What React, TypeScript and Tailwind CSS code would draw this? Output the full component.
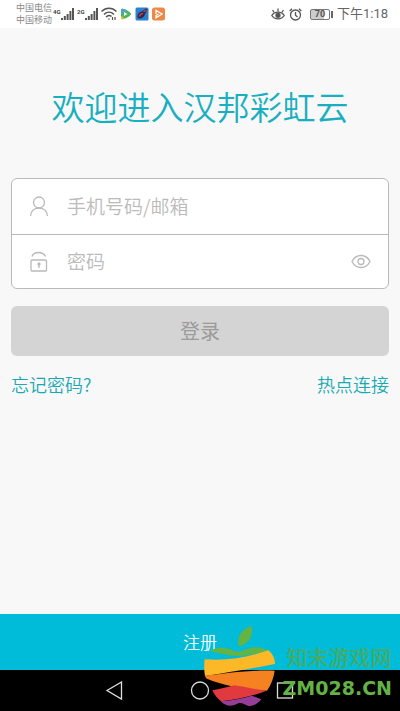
import { useState } from "react";

function SignalBars({ label }: { label: string }) {
  return (
    <div className="flex items-start">
      <span className="w-2 text-[6px] leading-2 font-bold text-[#444]">
        {label}
      </span>
      <svg width="13" height="13" viewBox="0 0 13 13" fill="#555">
        <rect x="0" y="10" width="2" height="2" />
        <rect x="2.8" y="8" width="2" height="4" />
        <rect x="5.6" y="6" width="2" height="6" />
        <rect x="8.4" y="3" width="2" height="9" />
        <rect x="11" y="0" width="2" height="12" />
      </svg>
    </div>
  );
}

function StatusBar() {
  return (
    <header className="flex h-7 items-center justify-between bg-white pr-3 pl-4 font-['Roboto','Noto_Sans_CJK_SC',sans-serif]">
      <div className="flex items-center gap-[3px]">
        <div className="w-[34px] text-[9px] leading-3 whitespace-nowrap text-[#888]">
          <p>中国电信</p>
          <p>中国移动</p>
        </div>
        <SignalBars label="4G" />
        <SignalBars label="2G" />
        <svg width="16" height="14" viewBox="0 0 16 14" fill="none" stroke="#555" strokeWidth="1.500">
          <path d="M.5 4.500C5 .3 11 .3 15.500 4.500" />
          <path d="M3 7.500c3-3 7-3 10 0" />
          <path d="M5 10c2-2 4-2 5.500-.5" />
          <path d="M6.500 11.500 8 13l1.200-1.300z" fill="#555" stroke="none" />
          <path d="M11.500 10v3M14 10v3" strokeWidth="1.200" />
        </svg>
        <svg width="12" height="12" viewBox="0 0 12 12">
          <path d="M1 2C1 1 2 .5 3.500 1 6 1.500 8.500 3 10.500 5c.8.800.8 1.400 0 2C8.500 9 6 10.500 3.500 11 2 11.500 1 11 1 10z" fill="#4cb45a" />
          <path d="M1 2C1 1 2 .5 3.500 1 5 1.300 6.500 2 7.500 2.600L1 6z" fill="#4aa7c9" />
          <path d="M1 7.500 5 10.500l-1.500.5C2 11.500 1 11 1 10z" fill="#e6b43c" />
          <path d="M4 4v4l3.500-2z" fill="#fff" />
        </svg>
        <svg width="14" height="14" viewBox="0 0 14 14">
          <rect x=".5" y=".5" width="13" height="13" rx="1.500" fill="#2c82cc" />
          <path d="M2.500 9.500c0-3 2-4.500 4.500-5L11 1.500l1.500 1L10 7c-.5 3-3.500 5-6 4.500-1 0-1.500-1-1.500-2z" fill="#29284f" />
          <path d="M4.500 9.500C5 7.500 6.500 6.500 8 6.500M8.500 5l3-2" fill="none" stroke="#d83c48" strokeWidth="1.500" />
        </svg>
        <svg width="13" height="14" viewBox="0 0 13 14">
          <rect y=".5" width="13" height="13" rx="2.500" fill="#ed8845" />
          <path d="M4 7V3.500L10 7l-6 3.800V8.500L6.500 7" fill="none" stroke="#fff" strokeWidth="1.300" />
        </svg>
      </div>
      <div className="flex items-center gap-1">
        <svg width="14" height="14" viewBox="0 0 14 14" fill="none" stroke="#555" strokeWidth="1.300">
          <path d="M.8 8.500C3.500 4 10.500 4 13.200 8.500 10.500 13 3.500 13 .8 8.500z" />
          <circle cx="7" cy="8.300" r="2" fill="#555" />
          <path d="M7 4.500V1.500M3.200 5.500 1.500 3M10.800 5.500 12.500 3" />
        </svg>
        <svg width="13" height="13" viewBox="0 0 13 13" fill="none" stroke="#555" strokeWidth="1.300">
          <circle cx="6.500" cy="7" r="5" />
          <path d="M6.500 4v3.200L8.500 9M.7 3 3 .8M12.300 3 10 .8" />
        </svg>
        <div className="flex items-center pl-1">
          <div className="flex h-[11px] w-5 items-center justify-center rounded-xs border border-[#777] bg-linear-to-r from-[#ccc] from-70% to-white to-70% text-[9px] leading-none font-bold text-[#555]">
            70
          </div>
          <div className="ml-px h-[7px] w-0.5 bg-[#666]" />
        </div>
        <span className="text-[13px] leading-5 text-[#666]">下午1:18</span>
      </div>
    </header>
  );
}

function UserIcon() {
  return (
    <svg width="20" height="22" viewBox="0 0 20 22" fill="none" stroke="#b9b9b9" strokeWidth="1.300">
      <circle cx="10" cy="6.500" r="5.500" />
      <path d="M1.500 20c.3-4.500 3.300-8 8.500-8s8.200 3.500 8.500 8" />
    </svg>
  );
}

function LockIcon() {
  return (
    <svg width="20" height="22" viewBox="0 0 20 22" fill="none" stroke="#b9b9b9" strokeWidth="1.300">
      <rect x="2" y="9" width="15.500" height="11" rx="1" />
      <path d="M3 5.500c1-2.700 3.500-4 6.500-4s5.500 1.300 7 4" />
      <circle cx="10" cy="13" r="1" />
      <path d="M10 13.500V17" />
    </svg>
  );
}

function EyeIcon() {
  return (
    <svg width="20" height="16" viewBox="0 0 20 16" fill="none" stroke="#b9b9b9" strokeWidth="1.300">
      <path d="M1 7.500c4-8 14-8 18 0-4 8-14 8-18 0z" />
      <circle cx="10" cy="7.500" r="3" />
    </svg>
  );
}

function Watermark() {
  return (
    <div className="pointer-events-none absolute right-2 bottom-1 flex items-end gap-[7px]">
      <svg width="73" height="82" viewBox="30 27 219 246">
        <path d="M137 91c-6-24 4-51 39-61 7 29-9 56-39 61z" fill="#63b345" />
        <path d="M51 105c25-16 53-9 71-1 12 5 20 3 32-2 22-10 46-13 70 1-25 10-60 16-89 17-28-1-55-8-84-15z" fill="#63b345" />
        <path d="M35 130c70 5 125-5 191-27 13 10 20 25 20 41-66 13-135 25-210 36-3-17-3-34-1-50z" fill="#fdb827" />
        <path d="M36 179c55-5 115-17 209-15-3 21-10 41-23 60-59-3-127-14-180-36-4-3-5-6-6-9z" fill="#f58220" />
        <path d="M58 223c22-4 43-9 66-15 32 5 62 12 97 16-39 15-84 27-137 32-11-9-19-19-26-33z" fill="#e03a3e" />
        <path d="M83 256c36-3 65-8 93-17l29 11c-8 10-20 19-34 20-15 0-20-13-35-8-20 12-38 9-53-6z" fill="#963d97" />
      </svg>
      <div className="pb-[3px] whitespace-nowrap">
        <p className="pl-1 text-[21px] leading-8 font-medium text-[#45ab68]">
          知末游戏网
        </p>
        <p className="font-['DejaVu_Sans'] text-[19px] leading-8 font-bold text-[#62b245]">
          ZM028.CN
        </p>
      </div>
    </div>
  );
}

export default function App() {
  const [account, setAccount] = useState("");
  const [password, setPassword] = useState("");
  const [visible, setVisible] = useState(false);

  const inputClass =
    "min-w-0 flex-1 bg-transparent text-[19px] font-[350] text-gray-700 outline-none placeholder:text-[#bbb]";

  return (
    <div className="flex min-h-screen flex-col bg-[#f8f8f8] font-['Noto_Sans_CJK_SC',sans-serif]">
      <StatusBar />

      <main className="flex-1 px-[11px] pt-[54px]">
        <h1 className="text-center text-[33px] leading-12 font-[350] text-[#18afc0]">
          欢迎进入汉邦彩虹云
        </h1>

        <form onSubmit={(e) => e.preventDefault()}>
          <div className="mt-12 rounded-md border border-[#b9b9b9] bg-white">
            <label className="flex h-14 items-center gap-[18px] border-b border-[#b9b9b9] px-[17px]">
              <UserIcon />
              <input
                type="text"
                aria-label="手机号码/邮箱"
                placeholder="手机号码/邮箱"
                value={account}
                onChange={(e) => setAccount(e.target.value)}
                className={inputClass}
              />
            </label>
            <div className="flex h-[53px] items-center gap-[18px] px-[17px]">
              <LockIcon />
              <input
                type={visible ? "text" : "password"}
                aria-label="密码"
                placeholder="密码"
                value={password}
                onChange={(e) => setPassword(e.target.value)}
                className={inputClass}
              />
              <button
                type="button"
                aria-label="密码"
                onClick={() => setVisible(!visible)}
              >
                <EyeIcon />
              </button>
            </div>
          </div>

          <button
            type="submit"
            className="mt-[17px] h-[50px] w-full rounded-md bg-[#d4d4d4] text-xl text-[#9b9b9b]"
          >
            登录
          </button>
        </form>

        <div className="mt-3.5 flex justify-between text-lg leading-7 font-[350] text-[#18a9b5]">
          <a href="#forgot">忘记密码?</a>
          <a href="#hotspot">热点连接</a>
        </div>
      </main>

      <footer className="relative">
        <button
          type="button"
          className="block h-14 w-full bg-[#00bcd8] text-[17px] font-[350] text-white"
        >
          注册
        </button>
        <nav className="flex h-[41px] items-center justify-around bg-black px-[72px]">
          <button type="button" aria-label="返回">
            <svg width="20" height="20" viewBox="0 0 20 20" fill="none" stroke="#ddd" strokeWidth="1.300">
              <path d="M2 9.500 16.500 1v17z" />
            </svg>
          </button>
          <button type="button" aria-label="主页">
            <svg width="20" height="20" viewBox="0 0 20 20" fill="none" stroke="#ddd" strokeWidth="1.300">
              <circle cx="10" cy="9.500" r="8.500" />
            </svg>
          </button>
          <button type="button" aria-label="最近">
            <svg width="20" height="20" viewBox="0 0 20 20" fill="none" stroke="#ddd" strokeWidth="1.300">
              <rect x="2.500" y="2" width="15" height="15" />
            </svg>
          </button>
        </nav>
        <Watermark />
      </footer>
    </div>
  );
}
